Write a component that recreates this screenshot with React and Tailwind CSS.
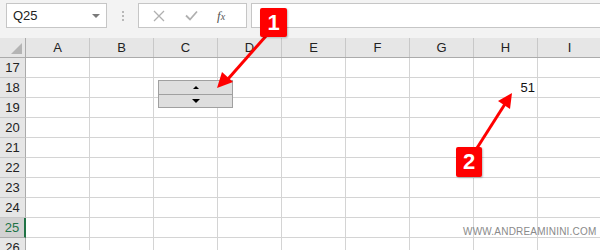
import React from 'react';

const COLS = ['A', 'B', 'C', 'D', 'E', 'F', 'G', 'H', 'I'];
const ROWS = [17, 18, 19, 20, 21, 22, 23, 24, 25, 26];

const Badge = ({ n, className }) => (
  <div className={`absolute flex items-center justify-center bg-[#ff0000] text-white font-bold text-[22px] leading-none rounded-[2px] shadow-[1px_1px_2px_rgba(0,0,0,0.25)] ${className}`}
    style={{ fontFamily: '"Liberation Sans", Arial, sans-serif' }}>
    {n}
  </div>
);

const App = () => {
  return (
    <div className="relative w-[600px] h-[250px] overflow-hidden bg-white" style={{ fontFamily: '"Liberation Sans", Arial, sans-serif' }}>

      {/* Barra formula */}
      <div className="h-[38px] bg-[#f3f3f3] flex items-start pt-[3px] pl-[6px]">
        <div className="w-[101px] h-[25px] bg-white border border-[#c6c6c6] flex items-center justify-between pl-[6px] pr-[6px]">
          <span className="text-[13px] text-[#222]">Q25</span>
          <span className="w-0 h-0 border-l-[4px] border-r-[4px] border-t-[4px] border-l-transparent border-r-transparent border-t-[#7a7a7a]" />
        </div>
        <div className="w-[31px] h-[25px] flex flex-col items-center justify-center gap-[2px]">
          <span className="w-[2px] h-[2px] bg-[#b8b8b8]" />
          <span className="w-[2px] h-[2px] bg-[#b8b8b8]" />
          <span className="w-[2px] h-[2px] bg-[#b8b8b8]" />
        </div>
        <div className="w-[109px] h-[25px] bg-white border border-[#c6c6c6] flex items-center">
          <svg width="12" height="12" viewBox="0 0 12 12" className="ml-[14px]">
            <path d="M1 1 L11 11 M11 1 L1 11" stroke="#b0b0b0" strokeWidth="1.3" />
          </svg>
          <svg width="13" height="11" viewBox="0 0 13 11" className="ml-[20px]">
            <path d="M1 5.5 L5 9.5 L12 1.5" stroke="#b0b0b0" strokeWidth="1.8" fill="none" />
          </svg>
          <span className="ml-[19px] text-[13px] italic text-[#555]" style={{ fontFamily: '"Liberation Serif", serif' }}>
            f<span className="text-[10px]">x</span>
          </span>
        </div>
        <div className="ml-[4px] flex-1 h-[25px] bg-white border border-[#c6c6c6] border-r-0" />
      </div>

      {/* Intestazione colonne */}
      <div className="flex h-[20px] bg-[#e6e6e6] border-b border-[#ababab]">
        <div className="w-[26px] shrink-0 border-r border-[#ababab] relative">
          <span className="absolute right-[3px] bottom-[3px] w-0 h-0 border-l-[11px] border-t-[11px] border-l-transparent border-t-transparent border-b-0 border-r-0"
            style={{ borderBottom: '11px solid #b4b4b4', borderLeft: '11px solid transparent', borderTop: 0 }} />
        </div>
        {COLS.map(c => (
          <div key={c} className="w-[64px] shrink-0 border-r border-[#c8c8c8] flex items-center justify-center text-[13px] text-[#222]">
            {c}
          </div>
        ))}
      </div>

      {/* Righe */}
      {ROWS.map(r => {
        const sel = r === 25;
        return (
          <div key={r} className="flex h-[20px]">
            <div className={`w-[26px] shrink-0 border-b flex items-center justify-center text-[13px] ${sel ? 'bg-[#d2d2d2] text-[#217346] border-r-2 border-r-[#217346] border-b-[#ababab]' : 'bg-[#e6e6e6] text-[#222] border-r border-r-[#ababab] border-b-[#c8c8c8]'}`}>
              {r}
            </div>
            {COLS.map(c => (
              <div key={c} className="w-[64px] shrink-0 border-r border-b border-[#d4d4d4] flex items-center justify-end pr-[2px] text-[13px] text-[#111]">
                {r === 18 && c === 'H' ? '51' : ''}
              </div>
            ))}
          </div>
        );
      })}

      {/* Pulsante di selezione */}
      <div className="absolute left-[158px] top-[80px] w-[75px] h-[28px] border border-[#a0a0a0] bg-[#dedede] flex flex-col">
        <div className="flex-1 flex items-center justify-center border-b border-[#a0a0a0]">
          <span className="w-0 h-0 border-l-[3px] border-r-[3px] border-b-[3px] border-l-transparent border-r-transparent border-b-black" />
        </div>
        <div className="flex-1 flex items-center justify-center">
          <span className="w-0 h-0 border-l-[4px] border-r-[4px] border-t-[4px] border-l-transparent border-r-transparent border-t-black" />
        </div>
      </div>

      {/* Frecce */}
      <svg className="absolute inset-0 pointer-events-none" width="600" height="250">
        <line x1="266" y1="36" x2="228" y2="79" stroke="#ff0000" strokeWidth="3" />
        <polygon points="217,88 222,72 233,82" fill="#ff0000" />
        <line x1="477" y1="148" x2="505" y2="104" stroke="#ff0000" strokeWidth="3" />
        <polygon points="512,93 510,109 498,101" fill="#ff0000" />
      </svg>

      <Badge n="1" className="left-[260px] top-[8px] w-[27px] h-[29px]" />
      <Badge n="2" className="left-[456px] top-[147px] w-[26px] h-[30px]" />

      <div className="absolute left-[463px] top-[224px] text-[10px] text-[#8a8a8a] tracking-[0.2px]">
        WWW.ANDREAMININI.COM
      </div>
    </div>
  );
};

export default App;
